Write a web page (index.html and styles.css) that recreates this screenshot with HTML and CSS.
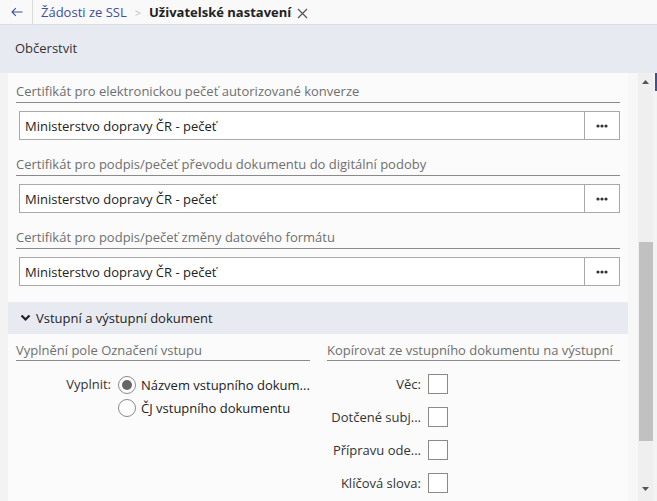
FILE: index.html
```html
<!DOCTYPE html>
<html lang="cs">
<head>
<meta charset="utf-8">
<title>Uživatelské nastavení</title>
<link rel="stylesheet" href="styles.css">
</head>
<body>
<div class="app">
  <header class="tabbar">
    <span class="back"><svg width="12" height="10" viewBox="0 0 12 10"><path d="M11.5 5H1M4.8 1.2L1 5L4.8 8.8" stroke="#3d4f9f" stroke-width="1.1" fill="none"/></svg></span>
    <span class="sep"></span>
    <a class="crumb">Žádosti ze SSL</a>
    <span class="chev">&gt;</span>
    <span class="current">Uživatelské nastavení</span>
    <span class="close">
      <svg width="11" height="11" viewBox="0 0 11 11"><path d="M1 1L10 10M10 1L1 10" stroke="#555" stroke-width="1.2" fill="none"/></svg>
    </span>
  </header>
  <div class="toolbar">
    <span class="tool">Občerstvit</span>
  </div>
  <div class="body">
    <div class="gutter"></div>
    <div class="panel">
      <div class="field">
        <div class="field-label">Certifikát pro elektronickou pečeť autorizované konverze</div>
        <div class="input"><span class="value">Ministerstvo dopravy ČR - pečeť</span><span class="dots"><svg width="12" height="4" viewBox="0 0 12 4"><circle cx="2" cy="2" r="1.6" fill="#333"/><circle cx="6" cy="2" r="1.6" fill="#333"/><circle cx="10" cy="2" r="1.6" fill="#333"/></svg></span></div>
      </div>
      <div class="field">
        <div class="field-label">Certifikát pro podpis/pečeť převodu dokumentu do digitální podoby</div>
        <div class="input"><span class="value">Ministerstvo dopravy ČR - pečeť</span><span class="dots"><svg width="12" height="4" viewBox="0 0 12 4"><circle cx="2" cy="2" r="1.6" fill="#333"/><circle cx="6" cy="2" r="1.6" fill="#333"/><circle cx="10" cy="2" r="1.6" fill="#333"/></svg></span></div>
      </div>
      <div class="field">
        <div class="field-label">Certifikát pro podpis/pečeť změny datového formátu</div>
        <div class="input"><span class="value">Ministerstvo dopravy ČR - pečeť</span><span class="dots"><svg width="12" height="4" viewBox="0 0 12 4"><circle cx="2" cy="2" r="1.6" fill="#333"/><circle cx="6" cy="2" r="1.6" fill="#333"/><circle cx="10" cy="2" r="1.6" fill="#333"/></svg></span></div>
      </div>
      <div class="section">
        <svg class="caret" width="11" height="8" viewBox="0 0 11 8"><path d="M1.5 1.5L5.5 5.5L9.5 1.5" stroke="#222" stroke-width="2.2" fill="none"/></svg>
        <span>Vstupní a výstupní dokument</span>
      </div>
      <div class="cols">
        <div class="col">
          <div class="sub-label">Vyplnění pole Označení vstupu</div>
          <div class="radio-group">
            <div class="radio-label">Vyplnit:</div>
            <div class="radios">
              <div class="radio"><span class="circle on"></span><span class="rtext">Názvem vstupního dokum...</span></div>
              <div class="radio"><span class="circle"></span><span class="rtext">ČJ vstupního dokumentu</span></div>
            </div>
          </div>
        </div>
        <div class="col">
          <div class="sub-label">Kopírovat ze vstupního dokumentu na výstupní</div>
          <div class="checks">
            <div class="check"><span class="clabel">Věc:</span><span class="box"></span></div>
            <div class="check"><span class="clabel">Dotčené subj...</span><span class="box"></span></div>
            <div class="check"><span class="clabel">Přípravu ode...</span><span class="box"></span></div>
            <div class="check"><span class="clabel">Klíčová slova:</span><span class="box"></span></div>
          </div>
        </div>
      </div>
    </div>
    <div class="gap"></div>
    <div class="scrollbar">
      <svg class="arrow" width="7" height="4" viewBox="0 0 7 4"><path d="M0 4L3.5 0L7 4Z" fill="#555"/></svg>
      <div class="thumb"></div>
      <svg class="arrow down" width="7" height="4" viewBox="0 0 7 4"><path d="M0 0L3.5 4L7 0Z" fill="#555"/></svg>
    </div>
    <div class="edge"><div class="edge-mark"></div></div>
  </div>
</div>
</body>
</html>
```
FILE: styles.css
```css
* { box-sizing: border-box; }
html, body { margin: 0; padding: 0; }
body {
  width: 657px;
  height: 501px;
  overflow: hidden;
  font-family: "Open Sans", "Noto Sans", sans-serif;
  font-size: 13px;
  color: #333;
  background: #f3f3f3;
}
.app { display: flex; flex-direction: column; height: 501px; }

.tabbar {
  height: 25px;
  background: #f9f9f9;
  border-bottom: 1px solid #dcdee6;
  display: flex;
  align-items: center;
  white-space: nowrap;
}
.back { width: 32px; display: flex; justify-content: center; align-items: center; padding-left: 1px; }
.sep { width: 1px; height: 25px; background: #dadada; }
.crumb { margin-left: 8px; color: #3d4f9f; font-size: 13px; }
.chev { margin: 0 8px 0 8px; color: #c2c2c2; font-size: 11px; }
.current { font-weight: 700; color: #222; font-size: 13px; }
.close { margin-left: 6px; display: flex; align-items: center; padding-top: 2px; }

.toolbar {
  height: 48px;
  background: #e8eaf2;
  display: flex;
  align-items: center;
  padding-left: 15px;
  padding-bottom: 2px;
}
.tool { color: #333; font-size: 13px; }

.body { flex: 1; display: flex; min-height: 0; }
.gutter { width: 8px; background: #f3f3f3; }
.panel {
  width: 620px;
  background: #fbfbfb;
  padding: 8px 8px 0 8px;
  overflow: hidden;
}
.gap { width: 10px; background: #f7f7f7; }
.scrollbar {
  width: 15px;
  background: #efefef;
  display: flex;
  flex-direction: column;
  align-items: center;
}
.arrow { margin-top: 7px; flex-shrink: 0; display: block; }
.thumb {
  flex-shrink: 0;
  width: 14px;
  margin-top: 158px;
  height: 199px;
  background: #c1c1c1;
}
.arrow.down { margin-top: 46px; }
.edge { width: 4px; background: #f3f3f3; display: flex; justify-content: flex-end; }
.edge-mark { width: 2px; height: 18px; background: #3d4f9f; }

.field { margin-bottom: 14px; }
.field-label {
  height: 22px;
  line-height: 20px;
  color: #6f6f6f;
  border-bottom: 1px solid #8a8a8a;
  white-space: nowrap;
}
.input {
  margin: 8px 0 0 3px;
  height: 29px;
  border: 1px solid #a9a9a9;
  background: #fff;
  display: flex;
  align-items: center;
}
.value { flex: 1; padding-left: 5px; color: #222; }
.dots {
  width: 35px;
  height: 100%;
  border-left: 1px solid #a9a9a9;
  display: flex;
  align-items: center;
  justify-content: center;
}

.section {
  margin: 16px -8px 0 -8px;
  height: 32px;
  background: #e8eaf2;
  display: flex;
  align-items: center;
  padding-left: 12px;
  color: #222;
}
.caret { margin-right: 5px; }

.cols { display: grid; grid-template-columns: 294px 293px; column-gap: 17px; margin-top: 6px; }
.sub-label {
  height: 21px;
  line-height: 20px;
  color: #6f6f6f;
  border-bottom: 1px solid #8a8a8a;
  white-space: nowrap;
}
.radio-group { display: flex; margin-top: 12px; }
.radio-label { width: 95px; text-align: right; line-height: 23px; color: #333; }
.radios { margin-left: 7px; }
.radio { display: flex; align-items: center; height: 23px; }
.circle {
  width: 18px; height: 18px; border-radius: 50%;
  border: 1px solid #8a8a8a; background: #fff;
  display: inline-flex; align-items: center; justify-content: center;
  margin-right: 5px;
}
.circle.on::after {
  content: ""; width: 10px; height: 10px; border-radius: 50%; background: #666;
}
.rtext { color: #222; white-space: nowrap; }

.checks { margin-top: 6px; }
.check { display: flex; align-items: center; height: 33px; }
.clabel { width: 94px; text-align: right; white-space: nowrap; overflow: hidden; color: #333; }
.box { width: 20px; height: 20px; border: 1px solid #8a8a8a; background: #fff; margin-left: 7px; }
```
